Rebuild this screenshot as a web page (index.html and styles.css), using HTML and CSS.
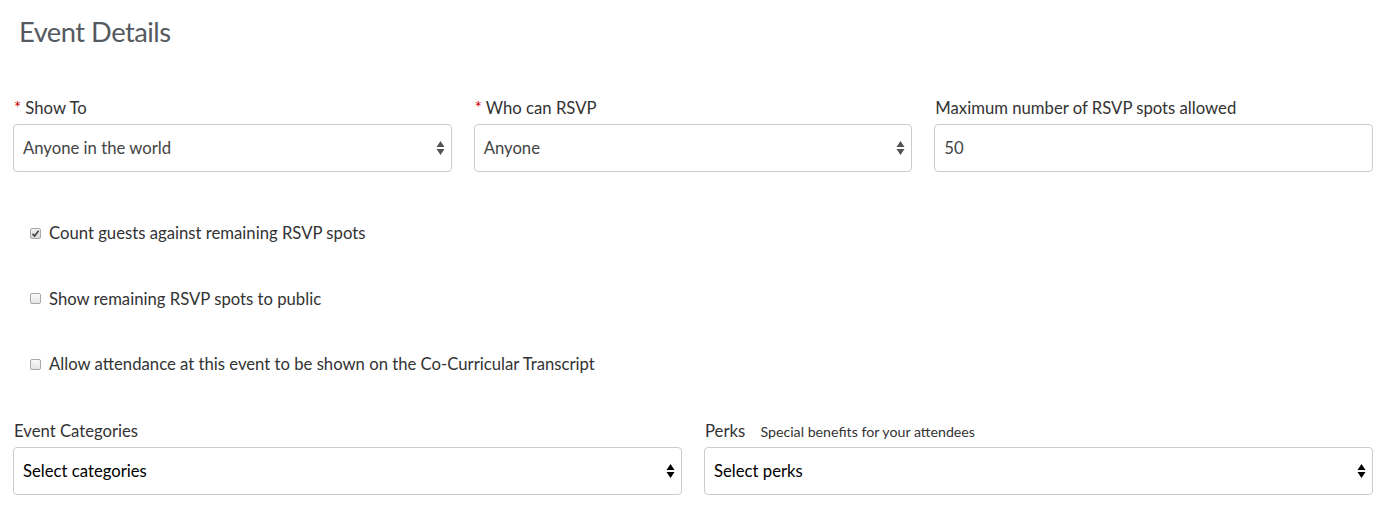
FILE: index.html
```html
<!DOCTYPE html>
<html>
<head>
<meta charset="utf-8">
<link rel="stylesheet" href="styles.css">
</head>
<body>
<div class="page">
  <h1 class="title">Event Details</h1>

  <div class="row three">
    <div class="field">
      <label class="label"><span class="req">*</span> Show To</label>
      <div class="select">
        <span class="value">Anyone in the world</span>
        <svg class="arrows" width="9" height="16" viewBox="0 0 9 16"><path d="M4.5 1 L8.5 7 L0.5 7 Z M4.5 15 L8.5 9 L0.5 9 Z" fill="#555"/></svg>
      </div>
    </div>
    <div class="field">
      <label class="label"><span class="req">*</span> Who can RSVP</label>
      <div class="select">
        <span class="value">Anyone</span>
        <svg class="arrows" width="9" height="16" viewBox="0 0 9 16"><path d="M4.5 1 L8.5 7 L0.5 7 Z M4.5 15 L8.5 9 L0.5 9 Z" fill="#555"/></svg>
      </div>
    </div>
    <div class="field">
      <label class="label">Maximum number of RSVP spots allowed</label>
      <div class="input"><span class="value">50</span></div>
    </div>
  </div>

  <div class="checks">
    <label class="check"><span class="box checked"><svg width="9" height="9" viewBox="0 0 9 9"><path d="M1.5 4.8 L3.6 6.9 L7.6 1.8" fill="none" stroke="#444" stroke-width="1.7"/></svg></span>Count guests against remaining RSVP spots</label>
    <label class="check"><span class="box"></span>Show remaining RSVP spots to public</label>
    <label class="check"><span class="box"></span>Allow attendance at this event to be shown on the Co-Curricular Transcript</label>
  </div>

  <div class="row two">
    <div class="field">
      <label class="label">Event Categories</label>
      <div class="select dark">
        <span class="value">Select categories</span>
        <svg class="arrows" width="9" height="16" viewBox="0 0 9 16"><path d="M4.5 1 L8.5 7 L0.5 7 Z M4.5 15 L8.5 9 L0.5 9 Z" fill="#000"/></svg>
      </div>
    </div>
    <div class="field">
      <label class="label">Perks <span class="hint">Special benefits for your attendees</span></label>
      <div class="select dark">
        <span class="value">Select perks</span>
        <svg class="arrows" width="9" height="16" viewBox="0 0 9 16"><path d="M4.5 1 L8.5 7 L0.5 7 Z M4.5 15 L8.5 9 L0.5 9 Z" fill="#000"/></svg>
      </div>
    </div>
  </div>
</div>
</body>
</html>
```

FILE: styles.css
```css
html, body {
  margin: 0;
  padding: 0;
  background: #fff;
}
body {
  font-family: "Lato", "Liberation Sans", sans-serif;
  color: #333;
  font-size: 16.7px;
}
.page {
  padding: 0 13px;
}
.title {
  margin: 0;
  padding: 14px 0 0 6px;
  font-size: 27.3px;
  font-weight: 400;
  line-height: 36px;
  color: #545a5f;
  letter-spacing: -0.5px;
}
.row {
  display: grid;
  column-gap: 22px;
}
.three {
  grid-template-columns: 1fr 1fr 1fr;
  margin-top: 48px;
}
.two {
  grid-template-columns: 1fr 1fr;
  margin-top: 47px;
}
.field {
  display: flex;
  flex-direction: column;
}
.label {
  display: block;
  font-size: 16.7px;
  line-height: 20px;
  height: 20px;
  margin-bottom: 6px;
  padding-left: 1px;
  color: #333;
}
.req {
  color: #c00;
}
.hint {
  font-size: 14.2px;
  margin-left: 11px;
  color: #333;
}
.select, .input {
  height: 48px;
  box-sizing: border-box;
  border: 1px solid #ccc;
  border-radius: 4px;
  display: flex;
  align-items: center;
  justify-content: space-between;
  padding: 0 6px 0 9px;
  color: #444;
}
.select.dark {
  color: #000;
}
.value {
  font-size: 16.7px;
  line-height: 20px;
  margin-top: -1px;
}
.arrows {
  display: block;
}
.checks {
  display: flex;
  flex-direction: column;
  margin-top: 51px;
  padding-left: 17px;
  gap: 45.5px;
}
.check {
  display: flex;
  align-items: center;
  height: 20px;
  font-size: 16.7px;
  color: #333;
}
.box {
  width: 11px;
  height: 11px;
  box-sizing: border-box;
  border: 1px solid #a8a8a8;
  border-radius: 2px;
  background: linear-gradient(#fafafa, #e4e4e4);
  margin-right: 8px;
  display: flex;
  align-items: center;
  justify-content: center;
}
.box.checked {
  background: linear-gradient(#f0f0f0, #d8d8d8);
}
.box svg {
  display: block;
}
```
